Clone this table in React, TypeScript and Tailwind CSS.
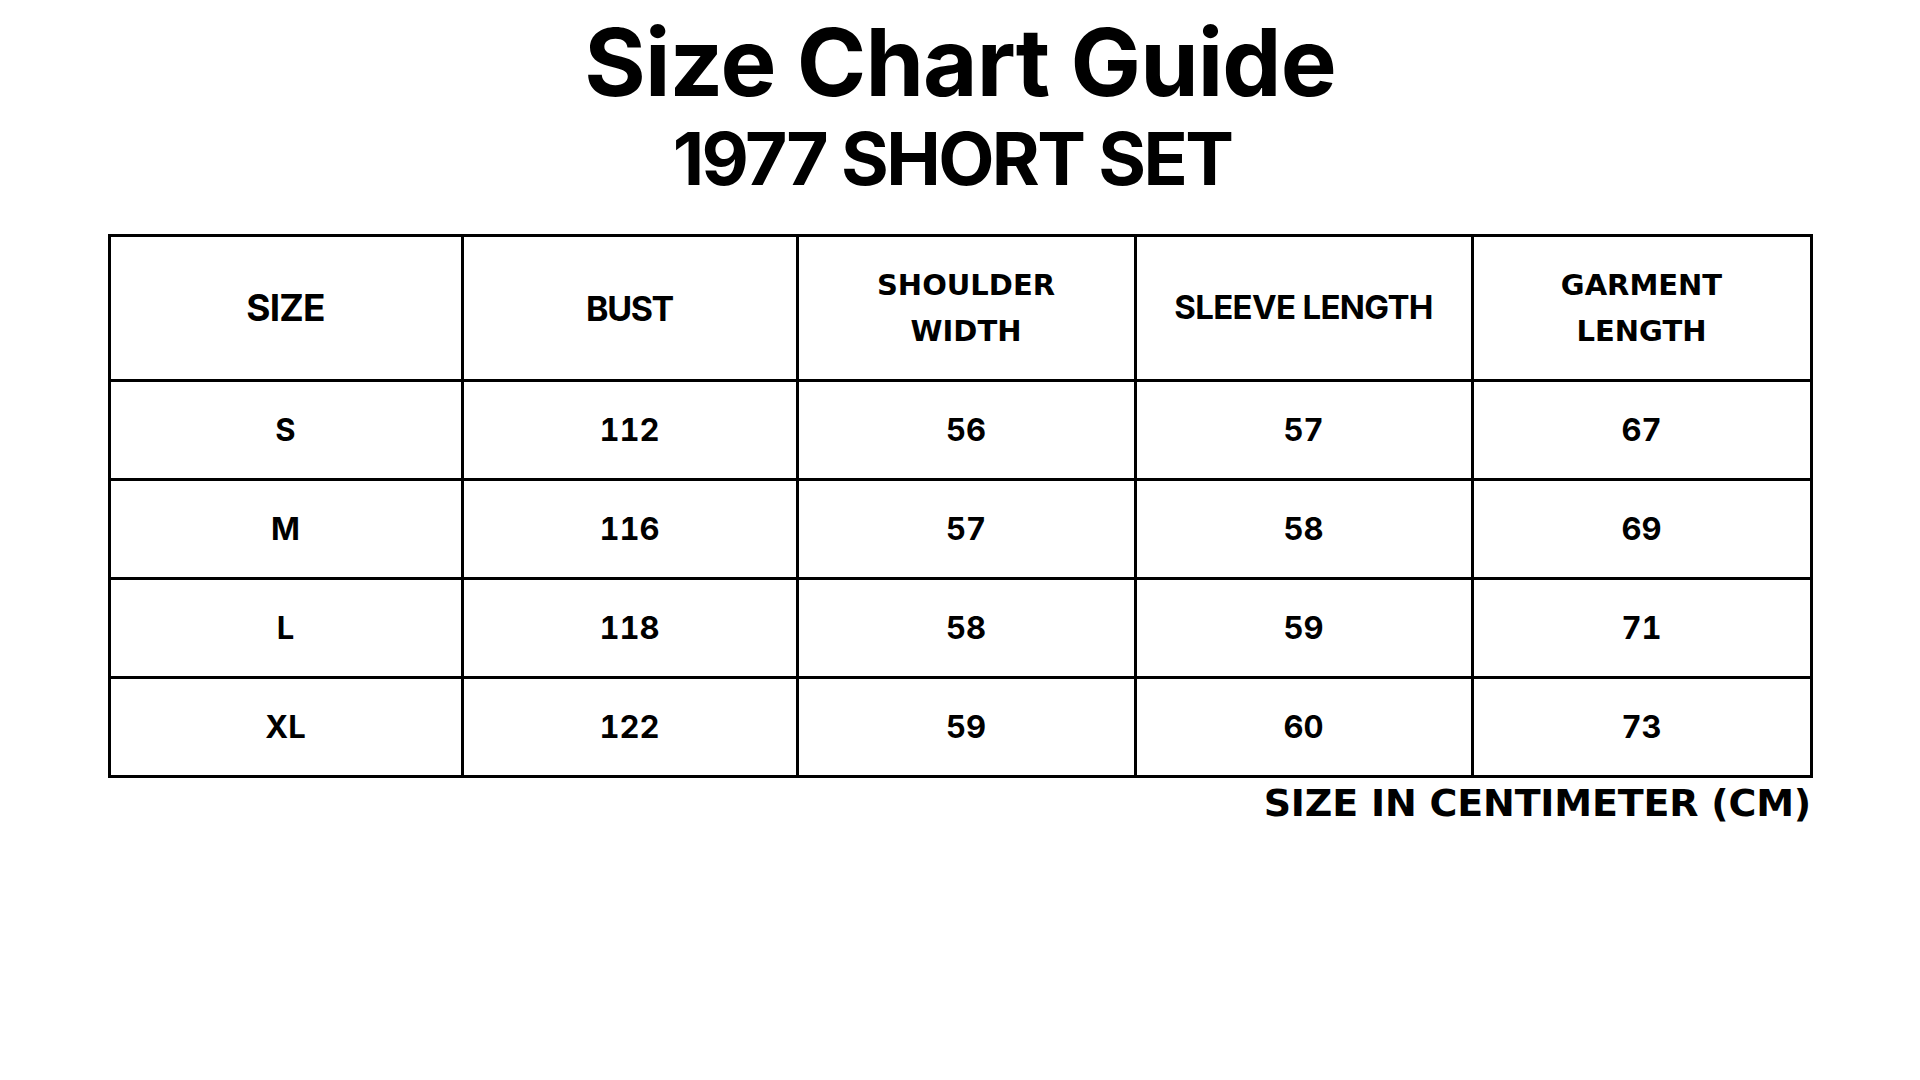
import React from "react";

type Header = { lines: string[]; cls: string };

const headers: Header[] = [
  { lines: ["SIZE"], cls: "text-[37px] tracking-[-0.02em]" },
  { lines: ["BUST"], cls: "text-[34px] tracking-[-0.04em]" },
  { lines: ["SHOULDER", "WIDTH"], cls: "text-[29px] leading-[46px] font-['DejaVu_Sans',sans-serif]" },
  { lines: ["SLEEVE LENGTH"], cls: "text-[33px] tracking-[-0.02em]" },
  { lines: ["GARMENT", "LENGTH"], cls: "text-[29px] leading-[46px] font-['DejaVu_Sans',sans-serif]" },
];
const rows: string[][] = [
  ["S", "112", "56", "57", "67"],
  ["M", "116", "57", "58", "69"],
  ["L", "118", "58", "59", "71"],
  ["XL", "122", "59", "60", "73"],
];
const widths = ["w-[353px]", "w-[335px]", "w-[338px]", "w-[337px]", "w-[339px]"];

export default function App() {
  return (
    <div className="w-[1920px] h-[1080px] bg-white text-black flex flex-col items-center font-['Inter','Liberation_Sans',sans-serif]">
      <h1 className="mt-[15px] text-[94px] leading-none font-bold tracking-[-0.01em]">Size Chart Guide</h1>
      <h2 className="mt-[13px] mr-[16px] text-[73px] leading-none font-bold tracking-[-0.035em]">1977 SHORT SET</h2>
      <table className="mt-[39px] w-[1702px] border-collapse border-[3px] border-black table-fixed">
        <thead>
          <tr className="h-[145px]">
            {headers.map((h, i) => (
              <th key={i} className={`${widths[i]} ${h.cls} border-[3px] border-black font-bold text-center align-middle`}>
                {h.lines.map((l, j) => (
                  <div key={j}>{l}</div>
                ))}
              </th>
            ))}
          </tr>
        </thead>
        <tbody>
          {rows.map((r, i) => (
            <tr key={i} className="h-[99px]">
              {r.map((c, j) => (
                <td key={j} className="border-[3px] border-black text-[31px] font-bold text-center align-middle tabular-nums">
                  {c}
                </td>
              ))}
            </tr>
          ))}
        </tbody>
      </table>
      <div className="w-[1702px] flex justify-end">
        <p className="mt-[6px] text-[38px] leading-none font-bold tracking-[-0.005em] font-['DejaVu_Sans',sans-serif]">SIZE IN CENTIMETER (CM)</p>
      </div>
    </div>
  );
}
